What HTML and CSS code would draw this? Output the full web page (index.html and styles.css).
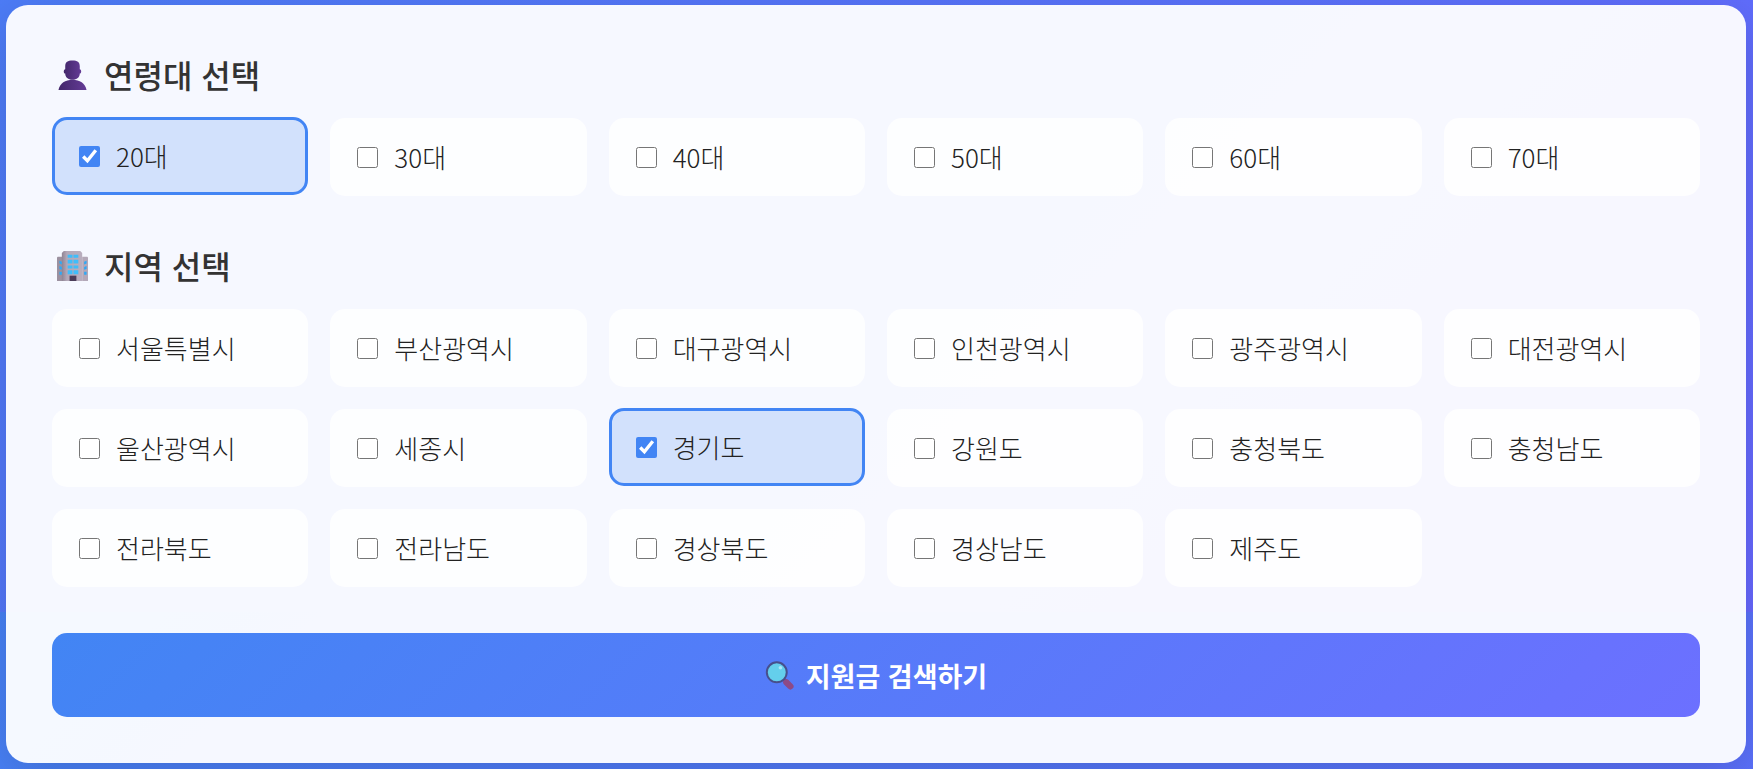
FILE: index.html
```
<!DOCTYPE html>
<html lang="ko">
<head>
  <meta charset="UTF-8">
  <meta name="viewport" content="width=device-width, initial-scale=1.0">
  <title>지원금 검색</title>
  <link rel="stylesheet" href="styles.css">
</head>
<body>
  <form class="search-card">
    <section class="filter-section">
      <h2 class="section-title">
        <svg class="title-icon" viewBox="0 0 32 32" aria-hidden="true">
          <defs>
            <linearGradient id="person" x1="0" x2="1">
              <stop offset="0" stop-color="#43276b"/>
              <stop offset="1" stop-color="#643b96"/>
            </linearGradient>
          </defs>
          <path d="M1.500 32C3 25 8.500 21.500 16 21.500S29 25 30.500 32z" fill="url(#person)"/>
          <path d="M8.500 7.500C8.500 3 11 1.500 16 1.500s7.500 1.500 7.500 6v3c2 0 2 4.500 0 4.500 0 4-3 6.500-7.500 6.500S8.500 19 8.500 15c-2 0-2-4.500 0-4.500z" fill="url(#person)"/>
        </svg>
        연령대 선택
      </h2>
      <div class="options">
        <label class="option"><input type="checkbox" name="age" value="20" checked>20대</label>
        <label class="option"><input type="checkbox" name="age" value="30">30대</label>
        <label class="option"><input type="checkbox" name="age" value="40">40대</label>
        <label class="option"><input type="checkbox" name="age" value="50">50대</label>
        <label class="option"><input type="checkbox" name="age" value="60">60대</label>
        <label class="option"><input type="checkbox" name="age" value="70">70대</label>
      </div>
    </section>

    <section class="filter-section">
      <h2 class="section-title">
        <svg class="title-icon" viewBox="0 0 32 32" aria-hidden="true">
          <defs>
            <linearGradient id="tower" x1="0" x2="1">
              <stop offset="0" stop-color="#8f8494"/>
              <stop offset=".25" stop-color="#b3a8b8"/>
              <stop offset="1" stop-color="#b9aebe"/>
            </linearGradient>
          </defs>
          <path d="M0 8q0-1 1-1h5v25H0z" fill="#9c91a0"/>
          <path d="M26 7h5q1 0 1 1v24h-6z" fill="#b3a8b8"/>
          <path d="M5 3l2-2h17l2 2v29H5z" fill="url(#tower)"/>
          <path d="M11 5h5v3h-5zM17 5h5v3h-5zM11 10h5v4h-5zM17 10h5v4h-5zM11 16h5v3h-5zM17 16h5v3h-5zM11 21h5v4h-5zM17 21h5v4h-5z" fill="#3fbdfa"/>
          <path d="M2.500 11l2.500 1v3l-2.500-1zM2.500 16.500l2.500 1v3l-2.500-1zM2.500 22.500H5v3H2.500zM28 12l2.500-1v3L28 15zM28 17.500l2.500-1v3l-2.500 1zM28 22.500h2.500v3H28z" fill="#2fa8f5"/>
          <path d="M13 26.500h7V32h-7z" fill="#4b3c58"/>
        </svg>
        지역 선택
      </h2>
      <div class="options">
        <label class="option"><input type="checkbox" name="region">서울특별시</label>
        <label class="option"><input type="checkbox" name="region">부산광역시</label>
        <label class="option"><input type="checkbox" name="region">대구광역시</label>
        <label class="option"><input type="checkbox" name="region">인천광역시</label>
        <label class="option"><input type="checkbox" name="region">광주광역시</label>
        <label class="option"><input type="checkbox" name="region">대전광역시</label>
        <label class="option"><input type="checkbox" name="region">울산광역시</label>
        <label class="option"><input type="checkbox" name="region">세종시</label>
        <label class="option"><input type="checkbox" name="region" checked>경기도</label>
        <label class="option"><input type="checkbox" name="region">강원도</label>
        <label class="option"><input type="checkbox" name="region">충청북도</label>
        <label class="option"><input type="checkbox" name="region">충청남도</label>
        <label class="option"><input type="checkbox" name="region">전라북도</label>
        <label class="option"><input type="checkbox" name="region">전라남도</label>
        <label class="option"><input type="checkbox" name="region">경상북도</label>
        <label class="option"><input type="checkbox" name="region">경상남도</label>
        <label class="option"><input type="checkbox" name="region">제주도</label>
      </div>
    </section>

    <button type="button" class="search-button">
      <svg class="search-icon" viewBox="0 0 32 32" aria-hidden="true">
        <path d="M20 19l3 3" stroke="#4d4a80" stroke-width="3"/>
        <path d="M23.500 23.500l4.500 4.500" stroke="#8d4a86" stroke-width="7" stroke-linecap="round"/>
        <circle cx="13" cy="12.500" r="11" fill="#64cfec" stroke="#47508c" stroke-width="2.200"/>
        <circle cx="17" cy="7.500" r="2" fill="#a9e8f8"/>
      </svg>
      지원금 검색하기
    </button>
  </form>
</body>
</html>
```

FILE: styles.css
```
* {
  box-sizing: border-box;
}
body {
  margin: 0;
  padding: 5px 7px 6px 6px;
  font-family: "Noto Sans CJK KR", sans-serif;
  color: #333;
  background: linear-gradient(135deg, #4285f4 0%, #6c63ff 100%) -400px 612px / 150% 1200px;
}
.search-card {
  padding: 46px;
  border-radius: 22px;
  background: rgba(255, 255, 255, 0.95);
  box-shadow: 0 12px 48px rgba(0, 0, 0, 0.15);
}
.filter-section {
  margin-bottom: 46px;
}
.section-title {
  display: flex;
  align-items: center;
  gap: 16px;
  margin: 0 0 21px;
  padding-left: 5px;
  font-size: 32px;
  font-weight: 500;
  line-height: 46px;
}
.title-icon {
  width: 31px;
  height: 31px;
}
.options {
  display: grid;
  grid-template-columns: repeat(6, 1fr);
  gap: 22px;
}
.option {
  display: flex;
  align-items: center;
  gap: 16px;
  padding: 18px 24px;
  border: 3px solid transparent;
  border-radius: 15px;
  background: rgba(255, 255, 255, 0.8);
  color: #222;
  font-size: 26px;
  font-weight: 300;
  line-height: 36px;
  cursor: pointer;
}
.option:has(input:checked) {
  border-color: #4285f4;
  background: #d2e1fc;
  transform: translateY(-1px);
}
.option input {
  width: 21px;
  height: 21px;
  margin: 0;
  accent-color: #4285f4;
}
.search-button {
  display: flex;
  align-items: center;
  justify-content: center;
  gap: 12px;
  width: 100%;
  height: 84px;
  border: none;
  border-radius: 15px;
  background: linear-gradient(135deg, #4285f4 0%, #6c70ff 100%);
  color: white;
  font-family: inherit;
  font-size: 27px;
  font-weight: 700;
  cursor: pointer;
}
.search-icon {
  width: 29px;
  height: 29px;
}
```
